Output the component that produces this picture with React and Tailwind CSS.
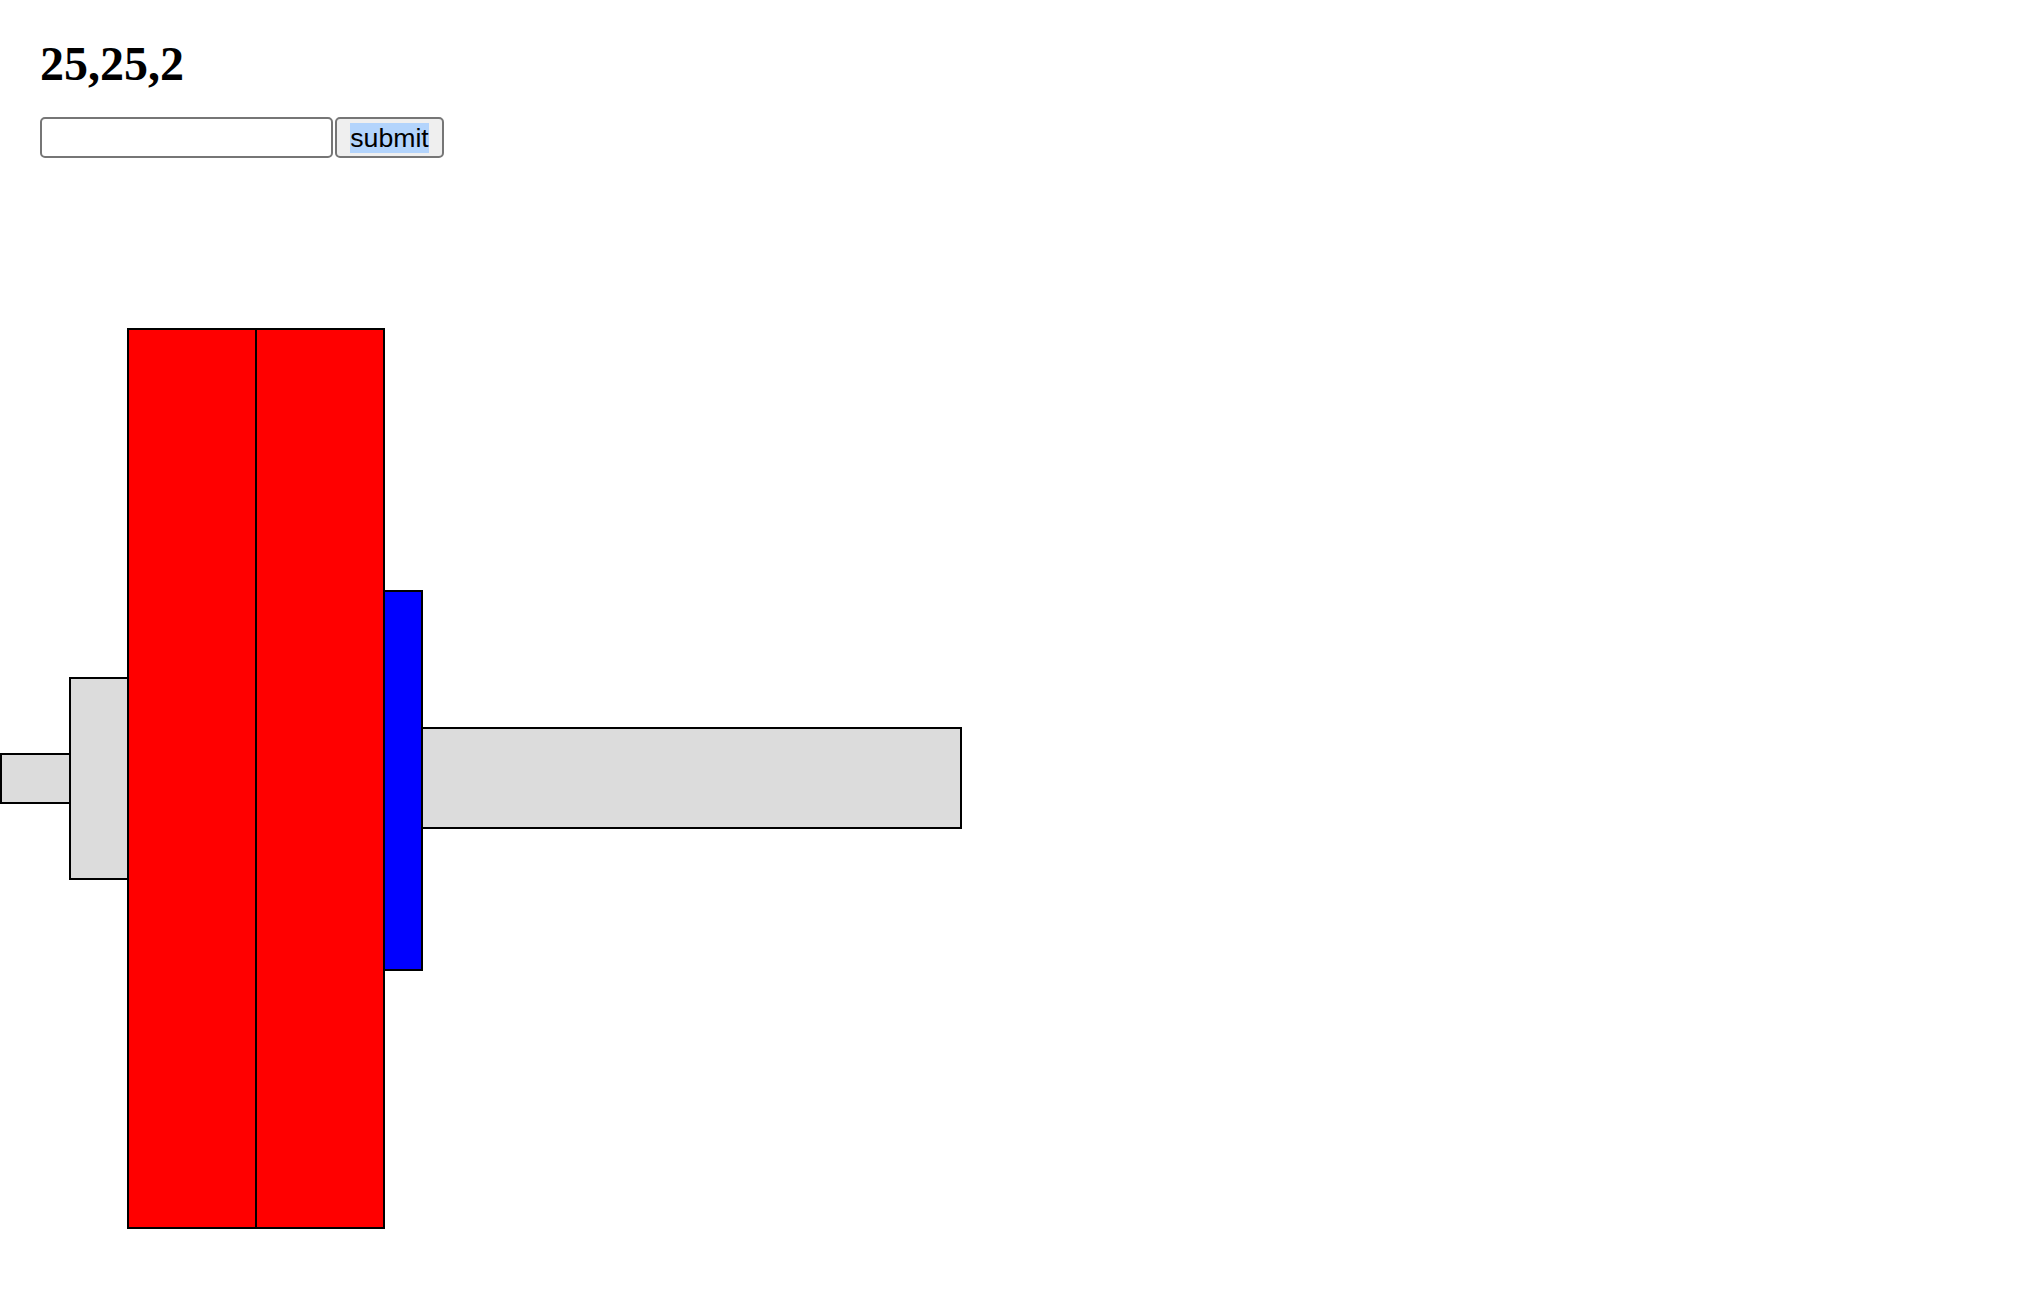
import React, { useState } from 'react';

// plates, collars and bar drawn left to right; widths include the shared 2px border
const parts = [
  { w: 'w-[71px]', h: 'h-[51px]', bg: 'bg-[#dcdcdc]', extra: '' },
  { w: 'w-[60px]', h: 'h-[203px]', bg: 'bg-[#dcdcdc]', extra: '' },
  { w: 'w-[130px]', h: 'h-[901px]', bg: 'bg-[#ff0000]', extra: '' },
  { w: 'w-[130px]', h: 'h-[901px]', bg: 'bg-[#ff0000]', extra: '' },
  { w: 'w-[40px]', h: 'h-[381px]', bg: 'bg-[#0000ff]', extra: 'mt-[4px]' },
  { w: 'w-[541px]', h: 'h-[102px]', bg: 'bg-[#dcdcdc]', extra: '' },
];

const App = () => {
  const [weights, setWeights] = useState('');

  return (
    <div className="min-h-screen w-full bg-white text-black">
      <div className="pl-[40px] pt-[36px]">
        <h2 className="font-['Liberation_Serif',serif] font-bold text-[48px] leading-[55px]">
          25,25,2
        </h2>

        <div className="mt-[26px] flex gap-[2px]">
          <input
            type="text"
            value={weights}
            onChange={(e) => setWeights(e.target.value)}
            className="w-[293px] h-[41px] border-2 border-[#767676] rounded-[5px] bg-white px-[4px] font-['Liberation_Sans',sans-serif] text-[26px] outline-none"
          />
          <button className="h-[41px] w-[109px] border-2 border-[#767676] rounded-[5px] bg-[#efefef] flex items-center justify-center font-['Liberation_Sans',sans-serif] text-[26.67px] leading-[30px]">
            <span className="bg-[#b3d4fc]">submit</span>
          </button>
        </div>
      </div>

      <div className="mt-[169px] h-[902px] flex items-center">
        {parts.map((p, i) => (
          <div
            key={i}
            className={`${p.w} ${p.h} ${p.bg} ${p.extra} shrink-0 border-2 border-black ${i > 0 ? '-ml-[2px]' : ''}`}
          />
        ))}
      </div>
    </div>
  );
};

export default App;
